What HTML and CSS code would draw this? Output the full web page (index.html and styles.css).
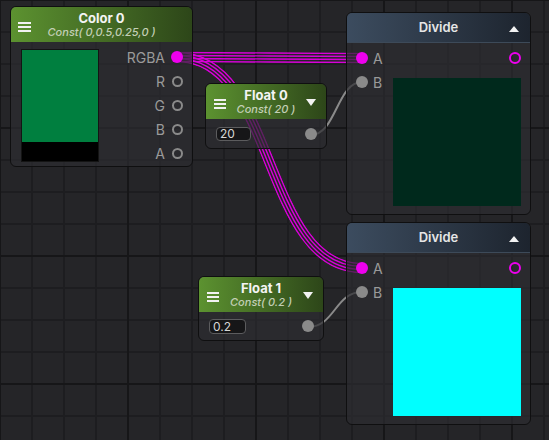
FILE: index.html
```html
<!DOCTYPE html>
<html>
<head>
<meta charset="utf-8">
<title>Shader Graph</title>
<link rel="stylesheet" href="styles.css">
</head>
<body>
<div class="canvas">
  <svg class="wires" width="549" height="440" viewBox="0 0 549 440">
    <defs>
      <path id="w1" d="M177 57 C 277 57, 262 58, 362 58"/>
      <path id="w2" d="M177 57 C 277 57, 262 268, 362 268"/>
      <mask id="m1" maskUnits="userSpaceOnUse" x="0" y="0" width="549" height="440">
        <g fill="none">
          <use href="#w1" stroke="#fff" stroke-width="10.4"/>
          <use href="#w1" stroke="#000" stroke-width="7.6"/>
          <use href="#w1" stroke="#fff" stroke-width="4.4"/>
          <use href="#w1" stroke="#000" stroke-width="1.6"/>
        </g>
      </mask>
      <mask id="m2" maskUnits="userSpaceOnUse" x="0" y="0" width="549" height="440">
        <g fill="none">
          <use href="#w2" stroke="#fff" stroke-width="10.4"/>
          <use href="#w2" stroke="#000" stroke-width="7.6"/>
          <use href="#w2" stroke="#fff" stroke-width="4.4"/>
          <use href="#w2" stroke="#000" stroke-width="1.6"/>
        </g>
      </mask>
    </defs>
    <g fill="none">
      <use href="#w1" stroke="#d800d8" stroke-width="11" mask="url(#m1)"/>
      <use href="#w2" stroke="#d800d8" stroke-width="11" mask="url(#m2)"/>
      <path d="M311 135 C 336 135, 337 82, 362 82" stroke="#8a8a8a" stroke-width="2"/>
      <path d="M308 327 C 335 327, 335 292, 362 292" stroke="#8a8a8a" stroke-width="2"/>
    </g>
  </svg>

  <div class="node n-color">
    <div class="header green">
      <span class="menu"><i></i><i></i><i></i></span>
      <div class="titles">
        <div class="title">Color 0</div>
        <div class="sub">Const( 0,0.5,0.25,0 )</div>
      </div>
      <span></span>
    </div>
    <div class="body color-body">
      <div class="swatch"><div class="sw-rgb"></div><div class="sw-alpha"></div></div>
      <div class="ports">
        <div class="port out"><span>RGBA</span><span class="dot fill-pink"></span></div>
        <div class="port out"><span>R</span><span class="dot ring-gray"></span></div>
        <div class="port out"><span>G</span><span class="dot ring-gray"></span></div>
        <div class="port out"><span>B</span><span class="dot ring-gray"></span></div>
        <div class="port out"><span>A</span><span class="dot ring-gray"></span></div>
      </div>
    </div>
  </div>

  <div class="node n-float0">
    <div class="header green">
      <span class="menu"><i></i><i></i><i></i></span>
      <div class="titles">
        <div class="title">Float 0</div>
        <div class="sub">Const( 20 )</div>
      </div>
      <span class="tri-down"></span>
    </div>
    <div class="body float-body">
      <div class="field">20</div>
      <span class="dot fill-gray"></span>
    </div>
  </div>

  <div class="node n-float1">
    <div class="header green">
      <span class="menu"><i></i><i></i><i></i></span>
      <div class="titles">
        <div class="title">Float 1</div>
        <div class="sub">Const( 0.2 )</div>
      </div>
      <span class="tri-down"></span>
    </div>
    <div class="body float-body">
      <div class="field">0.2</div>
      <span class="dot fill-gray"></span>
    </div>
  </div>

  <div class="node n-div1">
    <div class="header blue">
      <span></span>
      <div class="titles"><div class="title">Divide</div></div>
      <span class="tri-up"></span>
    </div>
    <div class="body div-body">
      <div class="ports">
        <div class="port in"><span class="dot fill-pink"></span><span>A</span></div>
        <div class="port in"><span class="dot fill-gray"></span><span>B</span></div>
      </div>
      <div class="div-right">
        <div class="port out"><span class="dot ring-pink"></span></div>
        <div class="preview dark"></div>
      </div>
    </div>
  </div>

  <div class="node n-div2">
    <div class="header blue">
      <span></span>
      <div class="titles"><div class="title">Divide</div></div>
      <span class="tri-up"></span>
    </div>
    <div class="body div-body">
      <div class="ports">
        <div class="port in"><span class="dot fill-pink"></span><span>A</span></div>
        <div class="port in"><span class="dot fill-gray"></span><span>B</span></div>
      </div>
      <div class="div-right">
        <div class="port out"><span class="dot ring-pink"></span></div>
        <div class="preview cyan"></div>
      </div>
    </div>
  </div>
</div>
</body>
</html>
```

FILE: styles.css
```css
html, body {
  margin: 0;
  padding: 0;
}
body {
  width: 549px;
  height: 440px;
  overflow: hidden;
  background: #252528;
  font-family: Inter, "Noto Sans", "DejaVu Sans", sans-serif;
}
.canvas {
  position: relative;
  width: 549px;
  height: 440px;
  background-color: #252528;
  background-image:
    linear-gradient(to right, #161618 2px, transparent 2px),
    linear-gradient(to bottom, #161618 2px, transparent 2px),
    linear-gradient(to right, #1d1d20 2px, transparent 2px),
    linear-gradient(to bottom, #1d1d20 2px, transparent 2px);
  background-size: 128px 128px, 128px 128px, 32px 32px, 32px 32px;
  background-position: -1px -1px, -1px -1px, -1px -1px, -1px -1px;
}
.wires {
  position: absolute;
  left: 0;
  top: 0;
}
.node {
  position: absolute;
  box-sizing: border-box;
  border: 1px solid #0f0f10;
  border-radius: 6px;
  background: rgba(44, 44, 48, 0.7);
  overflow: hidden;
  display: flex;
  flex-direction: column;
}
.n-color { left: 10px; top: 6px; width: 183px; height: 161px; }
.n-float0 { left: 205px; top: 83px; width: 122px; height: 66px; }
.n-float1 { left: 198px; top: 276px; width: 126px; height: 65px; }
.n-div1 { left: 346px; top: 12px; width: 185px; height: 203px; }
.n-div2 { left: 346px; top: 222px; width: 185px; height: 203px; }

.header {
  flex: none;
  height: 35px;
  box-sizing: border-box;
  display: grid;
  grid-template-columns: 12px 1fr 12px;
  align-items: center;
  padding: 0 8px;
}
.n-color .header {
  grid-template-columns: 13px 1fr 13px;
  padding: 0 7px;
}
.green {
  background: linear-gradient(to right, #5c9230, #2d4619);
}
.blue {
  height: 30px;
  padding: 0 9px;
  background: linear-gradient(to right, #3c4c5f, #1d242e);
  border-bottom: 1px solid #3d4a59;
}
.menu {
  display: flex;
  flex-direction: column;
  gap: 2px;
  margin-top: 4px;
}
.menu i {
  display: block;
  height: 2px;
  background: #f2f2f2;
}
.titles {
  text-align: center;
  white-space: nowrap;
}
.title {
  font-size: 13px;
  line-height: 15px;
  font-weight: 700;
  color: #f4f4f4;
}
.blue .title {
  font-weight: 600;
  color: #e6e6e6;
}
.sub {
  font-size: 11px;
  line-height: 13px;
  font-style: italic;
  font-weight: 500;
  color: #c3cfb6;
}
.tri-down {
  width: 0;
  height: 0;
  border-left: 5px solid transparent;
  border-right: 5px solid transparent;
  border-top: 7px solid #f2f2f2;
  margin-top: 2px;
}
.tri-up {
  width: 0;
  height: 0;
  border-left: 5px solid transparent;
  border-right: 5px solid transparent;
  border-bottom: 6px solid #f2f2f2;
  margin-top: 3px;
}

.body {
  flex: 1;
  display: flex;
}
.color-body {
  justify-content: space-between;
  align-items: flex-start;
  padding: 3px 9px 0 10px;
}
.swatch {
  margin-top: 4px;
  width: 78px;
  height: 113px;
  box-sizing: border-box;
  border: 1px solid #141414;
  display: flex;
  flex-direction: column;
}
.sw-rgb { flex: 1; background: #007f3f; }
.sw-alpha { height: 19px; background: #000; }

.ports {
  display: flex;
  flex-direction: column;
}
.port {
  height: 24px;
  display: flex;
  align-items: center;
  gap: 6px;
  font-size: 14px;
  color: #9a9a9a;
}
.port.out { justify-content: flex-end; }
.port.in { gap: 5px; }

.dot {
  display: block;
  width: 12px;
  height: 12px;
  box-sizing: border-box;
  border-radius: 50%;
}
.fill-pink { background: #ee00ee; }
.fill-gray { background: #8a8a8a; }
.ring-gray { border: 2px solid #8a8a8a; width: 11px; height: 11px; margin: 0 0.5px; }
.ring-pink { border: 2px solid #ee00ee; }

.float-body {
  align-items: center;
  justify-content: space-between;
  padding: 0 9px 0 10px;
}
.field {
  width: 36px;
  height: 15px;
  box-sizing: border-box;
  border: 1px solid #5c5c5e;
  border-radius: 4px;
  background: #161618;
  color: #d6d6d6;
  font-size: 12px;
  line-height: 13px;
  padding-left: 3px;
}
.n-float0 .field { width: 35px; height: 14px; line-height: 12px; }
.n-float1 .field { width: 37px; }

.div-body {
  padding: 3px 9px 0 9px;
}
.div-right {
  flex: 1;
  display: flex;
  flex-direction: column;
  align-items: flex-end;
}
.preview {
  margin-top: 8px;
  width: 128px;
  height: 128px;
}
.dark { background: #00291c; }
.cyan { background: #00ffff; }
```
